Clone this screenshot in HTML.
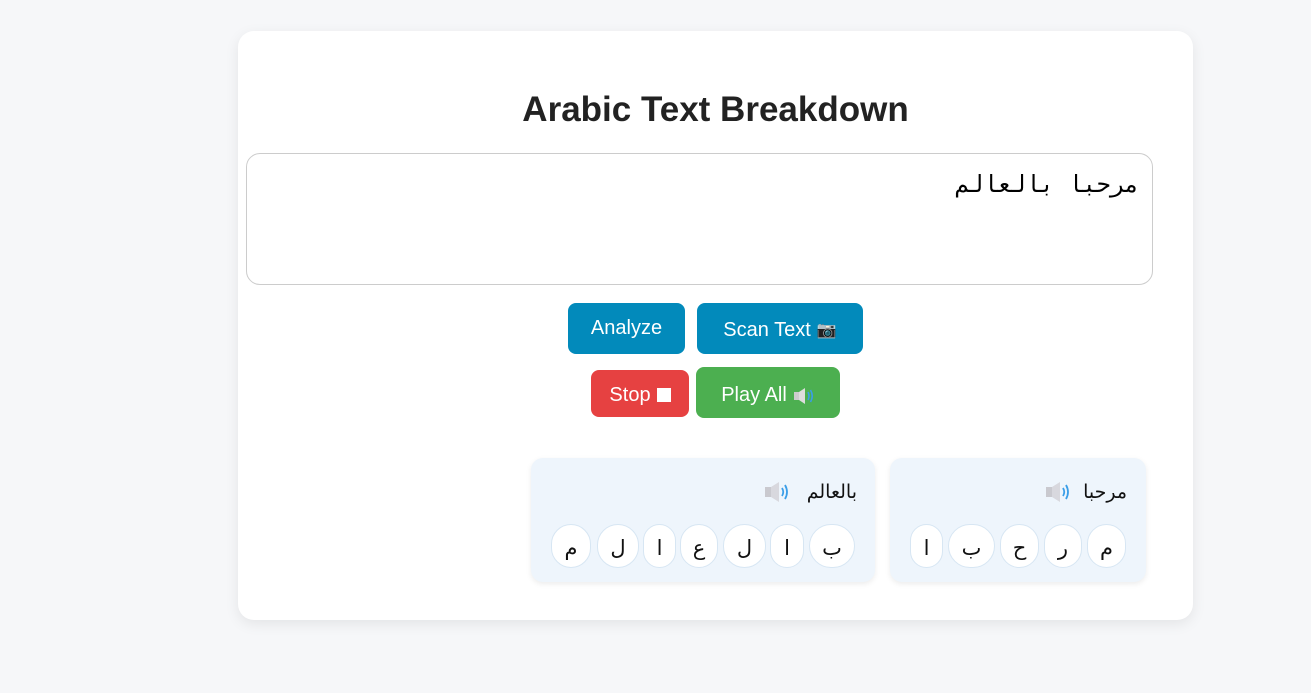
<!DOCTYPE html>
<html><head><meta charset="utf-8"><style>
*{box-sizing:border-box;margin:0;padding:0}
body{width:1311px;height:693px;background:#f6f7f9;font-family:"Liberation Sans",sans-serif;position:relative;overflow:hidden}
.card{position:absolute;left:238px;top:31px;width:955px;height:589px;background:#fff;border-radius:16px;box-shadow:0 4px 14px rgba(0,0,0,.08)}
h1{position:absolute;left:238px;width:955px;top:90px;text-align:center;font-family:"Liberation Sans",sans-serif;font-weight:bold;font-size:35px;color:#222}
.ta{position:absolute;left:246px;top:153px;width:907px;height:132px;border:1px solid #ccc;border-radius:14px;direction:rtl;padding:16px 13px;font-family:"DejaVu Sans Mono",monospace;font-size:23.5px;color:#000}
.btn{position:absolute;color:#fff;font-size:20px;border-radius:8px;display:flex;align-items:center;justify-content:center;gap:6px;padding-top:3px}
.blue{background:#028abb}
.wc{position:absolute;top:458px;height:124px;background:#eef5fc;border-radius:12px;box-shadow:0 2px 6px rgba(0,0,0,.08)}
.wt{position:absolute;top:481px;font-family:"DejaVu Sans",sans-serif;font-size:19px;color:#111;direction:rtl}
.l{position:absolute;top:524px;height:44px;border:1px solid #d7e6f3;background:#fff;border-radius:22px;font-family:"DejaVu Sans",sans-serif;font-size:21px;display:flex;align-items:center;justify-content:center;color:#111;padding-top:3px}
.sp{position:absolute;top:481px}
</style></head><body>
<div class="card"></div>
<h1>Arabic Text Breakdown</h1>
<div class="ta">مرحبا بالعالم</div>
<div class="btn blue" style="left:568px;top:303px;width:117px;height:51px;padding-top:0">Analyze</div>
<div class="btn blue" style="left:697px;top:303px;width:166px;height:51px">Scan Text <span style="font-size:16px">📷</span></div>
<div class="btn" style="left:591px;top:370px;width:98px;height:47px;background:#e64141">Stop <span style="display:inline-block;width:14px;height:14px;background:#fff;margin-left:0"></span></div>
<div class="btn" style="left:696px;top:367px;width:144px;height:51px;background:#4caf50;padding-top:6px">Play All
<svg width="22" height="18" viewBox="0 0 22 18"><rect x="1" y="5" width="5" height="8" fill="#ccc"/><path d="M6 5 L12 1 V17 L6 13Z" fill="#ddd"/><path d="M15 5 Q17 9 15 13" stroke="#3a9ee8" stroke-width="1.6" fill="none"/><path d="M17.5 3 Q21 9 17.5 15" stroke="#3a9ee8" stroke-width="1.6" fill="none"/></svg></div>

<div class="wc" style="left:890px;width:256px"></div>
<div class="wc" style="left:531px;width:344px"></div>
<div class="wt" style="right:184px">مرحبا</div>
<div class="wt" style="right:454px">بالعالم</div>
<svg class="sp" style="left:1045px" width="26" height="22" viewBox="0 0 26 22"><rect x="1" y="6" width="6" height="10" fill="#c9c9cf"/><path d="M7 6 L15 1 V21 L7 16Z" fill="#d8d8de"/><path d="M18 7 Q20.5 11 18 15" stroke="#3a9ee8" stroke-width="1.8" fill="none"/><path d="M21 4 Q25 11 21 18" stroke="#3a9ee8" stroke-width="1.8" fill="none"/></svg>
<svg class="sp" style="left:764px" width="26" height="22" viewBox="0 0 26 22"><rect x="1" y="6" width="6" height="10" fill="#c9c9cf"/><path d="M7 6 L15 1 V21 L7 16Z" fill="#d8d8de"/><path d="M18 7 Q20.5 11 18 15" stroke="#3a9ee8" stroke-width="1.8" fill="none"/><path d="M21 4 Q25 11 21 18" stroke="#3a9ee8" stroke-width="1.8" fill="none"/></svg>

<div class="l" style="left:1087px;width:39px">م</div>
<div class="l" style="left:1044px;width:38px">ر</div>
<div class="l" style="left:1000px;width:39px">ح</div>
<div class="l" style="left:948px;width:47px">ب</div>
<div class="l" style="left:910px;width:33px">ا</div>

<div class="l" style="left:809px;width:46px">ب</div>
<div class="l" style="left:770px;width:34px">ا</div>
<div class="l" style="left:723px;width:43px">ل</div>
<div class="l" style="left:680px;width:38px">ع</div>
<div class="l" style="left:643px;width:33px">ا</div>
<div class="l" style="left:597px;width:42px">ل</div>
<div class="l" style="left:551px;width:40px">م</div>
</body></html>
